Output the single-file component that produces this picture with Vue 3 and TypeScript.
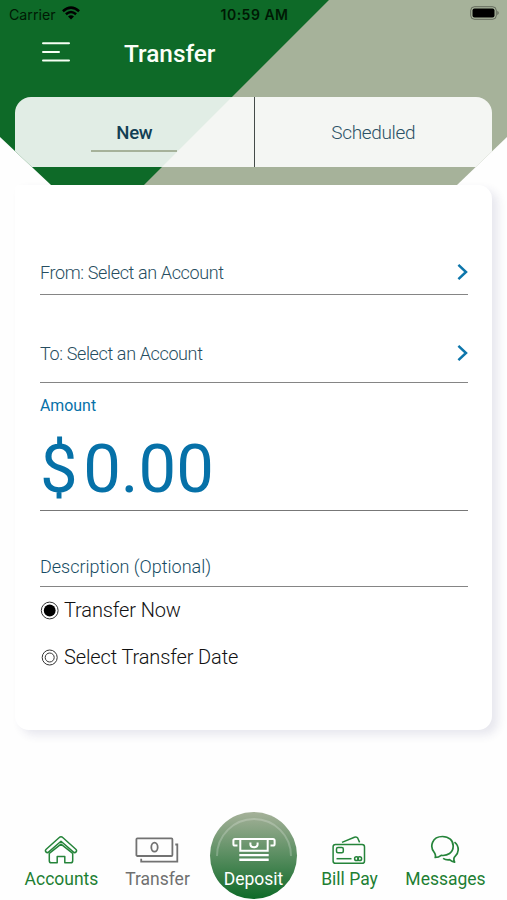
<script setup lang="ts">
import { ref } from 'vue'

type Tab = 'New' | 'Scheduled'
const tabs: Tab[] = ['New', 'Scheduled']
const activeTab = ref<Tab>('New')

const accounts = ['From: Select an Account', 'To: Select an Account']
const amount = ref('0.00')

const timings = ['Transfer Now', 'Select Transfer Date']
const timing = ref(timings[0])
</script>

<template>
  <div class="screen">
    <header class="header">
      <div class="status">
        <div class="carrier">
          <span>Carrier</span>
          <svg width="18" height="14" viewBox="0 0 18 14" fill="none" stroke="#000" stroke-width="2.5">
            <path d="M.9 5.2Q9-2 17.1 5.2M3.9 8.3Q9 3.8 14.1 8.3" />
            <path d="M9 13.6 6 10.6Q9 8 12 10.6Z" fill="#000" stroke="none" />
          </svg>
        </div>
        <span class="time">10:59 AM</span>
        <svg class="battery" width="30" height="14" viewBox="0 0 30 14">
          <rect x=".7" y=".7" width="25.6" height="12.6" rx="3.8" fill="none" stroke="#000" stroke-opacity=".4" />
          <rect x="2.5" y="2.5" width="22" height="9" rx="2" />
          <path d="M27.4 4.8Q30 7 27.4 9.2Z" fill-opacity=".45" />
        </svg>
      </div>
      <div class="titlebar">
        <svg width="28" height="20" viewBox="0 0 28 20" stroke="#f6fff4" stroke-width="2" stroke-linecap="round">
          <path d="M1 1.2H27M1 9.9H17M1 18.4H27" />
        </svg>
        <h1>Transfer</h1>
      </div>
      <nav class="tabs">
        <button
          v-for="tab in tabs"
          :key="tab"
          class="tab"
          :class="{ active: tab === activeTab }"
          @click="activeTab = tab"
        >
          <span>{{ tab }}</span>
        </button>
      </nav>
    </header>

    <main class="card">
      <div v-for="account in accounts" :key="account" class="account">
        <span>{{ account }}</span>
        <svg width="12" height="16" viewBox="0 0 12 16" fill="none" stroke="#0d76ab" stroke-width="2.5">
          <path d="M2.4 .9 10 8 2.4 15.1" />
        </svg>
      </div>
      <div class="amount">
        <span class="label">Amount</span>
        <div class="value"><span class="currency">$</span><span>{{ amount }}</span></div>
      </div>
      <div class="description">Description (Optional)</div>
      <div class="timings">
        <div v-for="option in timings" :key="option" class="timing" @click="timing = option">
          <svg width="19" height="19" viewBox="0 0 19 19" fill="none" stroke="#333">
            <template v-if="option === timing">
              <circle cx="9.7" cy="9.5" r="8.4" />
              <circle cx="9.7" cy="9.5" r="5.9" fill="#000" stroke="none" />
            </template>
            <template v-else>
              <circle cx="9.7" cy="9.5" r="7.5" />
              <circle cx="9.7" cy="9.5" r="4.5" />
            </template>
          </svg>
          <span>{{ option }}</span>
        </div>
      </div>
    </main>

    <footer class="nav">
      <div class="item">
        <svg width="34" height="30" viewBox="0 0 34 30" fill="none" stroke="#25843a" stroke-width="1.5" stroke-linejoin="round">
          <path d="M17 1.8Q18 1.8 19 2.7L31.8 14.3Q33.2 15.6 32.1 16.9Q30.8 18.2 29.5 17.1L17 6.2 4.5 17.1Q3.2 18.2 1.9 16.9Q.8 15.6 2.2 14.3L15 2.7Q16 1.8 17 1.8Z" />
          <path d="M5.3 18.3V25.7Q5.3 27.8 7.4 27.8H13.2V21.4H20.8V27.8H26.6Q28.7 27.8 28.7 25.7V18.3L17 9.2Z" />
        </svg>
        <span>Accounts</span>
      </div>
      <div class="item current">
        <svg width="44" height="30" viewBox="0 0 44 30" fill="none" stroke="#727272" stroke-width="1.8">
          <rect x="1.4" y="3.4" width="36" height="17.6" rx="1" />
          <ellipse cx="19.5" cy="12.2" rx="3.2" ry="4.5" />
          <path d="M40.3 9.5H42.3V26.7H6.2V23.7" />
        </svg>
        <span>Transfer</span>
      </div>
      <div class="item deposit">
        <svg class="ring" width="76" height="40" viewBox="0 0 76 40" fill="none" stroke="#fff" stroke-opacity=".22" stroke-width="2">
          <path d="M1 38A37 37 0 0 1 75 38" />
        </svg>
        <svg width="44" height="30" viewBox="0 0 44 30" fill="none" stroke="#fff" stroke-width="2">
          <path d="M5.5 10.5H3Q1.4 10.5 1.4 8.9V5.6Q1.4 4 3 4H41Q42.6 4 42.6 5.6V8.9Q42.6 10.5 41 10.5H38.5M8.3 5V15.8H35.7V5" />
          <path d="M18.4 7.5V9.5Q18.4 12.2 22 12.2Q25.6 12.2 25.6 9.5V7.5" />
          <path d="M7.3 20.1H36.7M7.3 24.7H36.7" stroke-width="2.4" />
        </svg>
        <span>Deposit</span>
      </div>
      <div class="item">
        <svg width="34" height="30" viewBox="0 0 34 30" fill="none" stroke="#25843a" stroke-width="1.5">
          <path d="M10 7.4 22.4 2.2Q24.8 1.3 25.8 3.2L27.6 7.4" />
          <rect x="1.1" y="9.4" width="31.4" height="18.9" rx="2.4" />
          <rect x="4.5" y="12.6" width="6.8" height="5.2" rx="1.5" />
          <path d="M4.5 23.7H19.5" />
          <circle cx="24.5" cy="23.7" r="1.9" /><circle cx="27.7" cy="23.7" r="1.9" />
        </svg>
        <span>Bill Pay</span>
      </div>
      <div class="item">
        <svg width="30" height="30" viewBox="0 0 30 30" fill="none" stroke="#25843a" stroke-width="1.7" stroke-linejoin="round">
          <path d="M4.6 18C-1 11.5 2.2 1.5 12.5 1.5C19 1.5 23.2 5.6 23.2 11C23.2 17.8 17.5 21.1 11.2 20.4Q8.7 22.5 5.2 22.5Q6 20.5 4.6 18Z" />
          <path d="M24.5 7.1Q28.4 10 28.2 15Q28 18.7 25.1 21.3Q22.9 23.2 24.6 27.2Q21.8 26.7 19.5 24.7Q15.7 25.1 13.1 23.4" />
        </svg>
        <span>Messages</span>
      </div>
    </footer>
  </div>
</template>

<style>
body {
  margin: 0;
  background: #fefefe;
}
</style>

<style scoped>
.screen {
  width: 507px;
  height: 900px;
  display: flex;
  flex-direction: column;
  overflow: hidden;
  background: #fefefe;
  font-family: Roboto, sans-serif;
}
.header {
  box-sizing: border-box;
  height: 185px;
  flex: none;
  background: linear-gradient(135deg, #0e6a28 0 232.2px, #a6b29a 233px);
  clip-path: polygon(0 0, 100% 0, 100% 137px, 457px 100%, 51px 100%, 0 137px);
}
.status {
  height: 28px;
  padding: 0 7px 0 9px;
  display: grid;
  grid-template-columns: 1fr auto 1fr;
  align-items: center;
  font-family: Inter, sans-serif;
  font-size: 14.2px;
  color: #001904;
}
.carrier {
  display: flex;
  align-items: center;
  gap: 6px;
}
.carrier svg {
  margin-top: -2px;
}
.time {
  font-weight: 600;
  font-size: 14px;
  letter-spacing: 0.5px;
}
.battery {
  justify-self: end;
  margin-top: -2px;
}
.titlebar {
  height: 69px;
  display: flex;
  align-items: flex-start;
  gap: 54px;
  padding: 14px 0 0 42px;
  box-sizing: border-box;
}
h1 {
  margin: -3px 0 0;
  font-size: 24.4px;
  line-height: 30px;
  font-weight: 500;
  color: #fbfff8;
}
.tabs {
  height: 70px;
  margin: 0 15px;
  display: grid;
  grid-template-columns: 1fr 1fr;
  border-radius: 16px 16px 0 0;
  overflow: hidden;
  background: rgba(255, 255, 255, 0.88);
}
.tab {
  border: 0;
  padding: 0;
  background: none;
  display: flex;
  justify-content: center;
  align-items: flex-start;
  font: 300 19px/22px Roboto, sans-serif;
  letter-spacing: -0.35px;
  color: #2c5266;
}
.tab + .tab {
  border-left: 1px solid #444b49;
}
.tab span {
  box-sizing: border-box;
  width: 86px;
  height: 55px;
  padding-top: 25px;
}
.tab.active {
  font-weight: 500;
  font-size: 18.6px;
  color: #123f54;
}
.tab.active span {
  border-bottom: 2px solid #a6b29a;
}
.card {
  box-sizing: border-box;
  flex: none;
  height: 545px;
  margin: 0 15px;
  padding: 67px 24px 0 25px;
  border-radius: 4px 14px 14px 14px;
  background: #fff;
  box-shadow: 6px 5px 10px rgba(45, 50, 110, 0.11);
}
.account {
  box-sizing: border-box;
  display: flex;
  justify-content: space-between;
  align-items: flex-start;
  height: 43px;
  padding-top: 10px;
  border-bottom: 1.5px solid #858585;
  font-size: 18px;
  line-height: 22px;
  letter-spacing: -0.37px;
  font-weight: 300;
  color: #264d60;
}
.account svg {
  margin-top: 2px;
}
.account + .account {
  height: 88px;
  padding-top: 48px;
}
.amount {
  box-sizing: border-box;
  height: 128px;
  padding-top: 13px;
  border-bottom: 1px solid #777;
  color: #0671a8;
}
.label {
  display: block;
  font-size: 15.9px;
  line-height: 20px;
}
.value {
  display: flex;
  gap: 5.5px;
  padding-top: 13px;
  font-size: 67px;
  line-height: 80px;
}
.description {
  box-sizing: border-box;
  height: 76px;
  padding-top: 45px;
  border-bottom: 1px solid #858585;
  font-size: 18px;
  line-height: 22px;
  font-weight: 300;
  color: #164c64;
}
.timings {
  display: grid;
  gap: 22px;
  padding-top: 11px;
}
.timing {
  display: flex;
  align-items: center;
  gap: 5px;
  font-size: 20px;
  line-height: 25px;
  letter-spacing: -0.12px;
  font-weight: 300;
  color: #111;
}
.nav {
  flex: 1;
  display: grid;
  grid-template-columns: repeat(5, 96px);
  justify-content: center;
  align-items: start;
  padding-top: 82px;
}
.item {
  display: flex;
  flex-direction: column;
  align-items: center;
  gap: 3px;
  box-sizing: border-box;
  height: 88px;
  padding-top: 23px;
  font-size: 17.5px;
  line-height: 22px;
  color: #1d7e33;
}
.item:not(.deposit) svg {
  margin-left: -1px;
}
.current {
  color: #707070;
}
.deposit {
  position: relative;
  justify-self: center;
  width: 87px;
  height: 87px;
  border-radius: 50%;
  background: linear-gradient(#a5b199, #0e6a28);
  color: #fff;
}
.ring {
  position: absolute;
  left: 5.5px;
  top: 6px;
}
</style>
